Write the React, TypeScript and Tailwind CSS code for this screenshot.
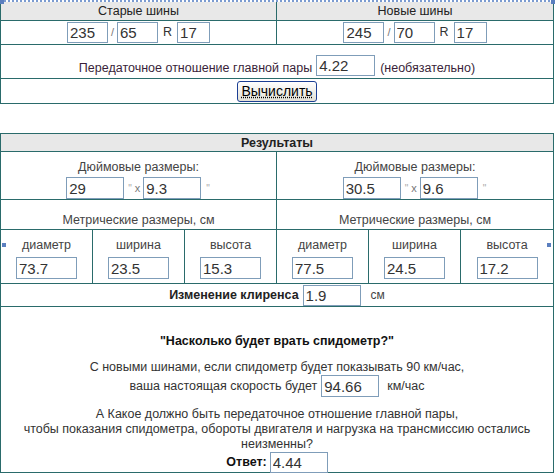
import React from "react";

const line = "border-[#2a6b6b]";

function Field({ value, className = "" }: { value: string; className?: string }) {
  return (
    <input
      readOnly
      value={value}
      className={`h-[21px] border border-[#7f9db9] bg-white px-[2px] text-[15px] leading-none text-[#333] outline-none font-['Liberation_Sans',Arial,sans-serif] ${className}`}
    />
  );
}

function TireInputs({ a, b, c }: { a: string; b: string; c: string }) {
  return (
    <div className="flex h-full items-center justify-center">
      <Field value={a} className="w-[41px]" />
      <span className="mx-[3px] text-[11px] text-[#777]">/</span>
      <Field value={b} className="w-[41px]" />
      <span className="mx-[5px] text-[#333]">R</span>
      <Field value={c} className="w-[33px]" />
    </div>
  );
}

function InchBlock({ d, w }: { d: string; w: string }) {
  return (
    <div className="flex flex-col items-center pt-[8px]">
      <span className="text-[#444]">Дюймовые размеры:</span>
      <div className="mt-[2px] flex items-center">
        <Field value={d} className="w-[58px] h-[22px]" />
        <span className="ml-[4px] text-[10px] text-[#aaa]">"</span>
        <span className="ml-[3px] mr-[3px] text-[11px] text-[#777]">x</span>
        <Field value={w} className="w-[58px] h-[22px]" />
        <span className="ml-[5px] mr-[1px] text-[10px] text-[#aaa]">"</span>
      </div>
    </div>
  );
}

function Handle({ className }: { className: string }) {
  return <span className={`absolute h-[4px] w-[4px] bg-[#5b7fbf] ${className}`} />;
}

export default function App() {
  const metric = [
    { label: "диаметр", value: "73.7" },
    { label: "ширина", value: "23.5" },
    { label: "высота", value: "15.3" },
    { label: "диаметр", value: "77.5" },
    { label: "ширина", value: "24.5" },
    { label: "высота", value: "17.2" },
  ];

  return (
    <div className="relative h-[474px] w-[556px] bg-white text-[12.5px] leading-[15px] text-[#2e1e2e] font-['Liberation_Sans',Arial,sans-serif]">
      {/* first form */}
      <div className="h-[2px] w-[554px] border-t-2 border-dotted border-[#7b9bd0]" />
      <div className={`w-[554px] border-x ${line}`}>
        <div className={`grid grid-cols-2 border-b ${line}`}>
          <div className={`h-[18px] border-r ${line} bg-[#e8e8e8] text-center leading-[18px] text-[#222]`}>
            Старые шины
          </div>
          <div className="h-[18px] bg-[#e8e8e8] text-center leading-[18px] text-[#222]">Новые шины</div>
        </div>
        <div className={`grid h-[24px] grid-cols-2 border-b ${line}`}>
          <div className={`border-r ${line}`}>
            <TireInputs a="235" b="65" c="17" />
          </div>
          <div>
            <TireInputs a="245" b="70" c="17" />
          </div>
        </div>
        <div className={`flex h-[34px] items-end justify-center pb-[2px] border-b ${line}`}>
          <span className="mr-[4px] text-[#3a1f3a]">Передаточное отношение главной пары</span>
          <Field value="4.22" className="w-[59px]" />
          <span className="ml-[5px] text-[#3a1f3a]">(необязательно)</span>
        </div>
        <div className={`flex h-[25px] items-center justify-center border-b ${line}`}>
          <button className="h-[21px] w-[80px] rounded-[3px] border border-[#1c3f94] bg-gradient-to-b from-white to-[#e3e1d6] text-[14px] leading-none text-black underline decoration-dotted">
            Вычислить
          </button>
        </div>
      </div>

      {/* results */}
      <div className={`mt-[29px] w-[554px] border-x border-t ${line}`}>
        <div className={`h-[18px] border-b ${line} bg-[#e8e8e8] text-center font-bold leading-[18px] text-[#222]`}>
          Результаты
        </div>
        <div className={`grid h-[48px] grid-cols-2 border-b ${line}`}>
          <div className={`border-r ${line}`}>
            <InchBlock d="29" w="9.3" />
          </div>
          <InchBlock d="30.5" w="9.6" />
        </div>
        <div className={`grid h-[30px] grid-cols-2 border-b ${line}`}>
          <div className={`flex items-end justify-center pb-[1px] border-r ${line} text-[#444]`}>
            Метрические размеры, см
          </div>
          <div className="flex items-end justify-center pb-[1px] text-[#444]">Метрические размеры, см</div>
        </div>
        <div className={`grid grid-cols-6 border-b ${line}`}>
          {metric.map((m, i) => (
            <div key={i} className={`flex flex-col items-center ${i < 5 ? `border-r ${line}` : ""}`}>
              <span className="flex h-[26px] items-center pt-[5px] text-[#444]">{m.label}</span>
              <Field value={m.value} className="mt-[1px] mb-[4px] w-[61px] h-[22px]" />
            </div>
          ))}
        </div>
        <div className={`flex h-[23px] items-center justify-center border-b ${line}`}>
          <span className="mr-[4px] font-bold text-[#222]">Изменение клиренса</span>
          <Field value="1.9" className="w-[58px]" />
          <span className="ml-[10px] text-[12px] text-[#444]">см</span>
        </div>
        <div className={`flex h-[166px] flex-col items-center border-b ${line} pt-[27px] text-center`}>
          <p className="font-bold text-[#111]">"Насколько будет врать спидометр?"</p>
          <p className="mt-[11px] text-[#333]">С новыми шинами, если спидометр будет показывать 90 км/час,</p>
          <div className="flex items-center text-[#333]">
            <span className="mr-[4px]">ваша настоящая скорость будет</span>
            <Field value="94.66" className="w-[58px] h-[22px]" />
            <span className="ml-[8px]">км/час</span>
          </div>
          <p className="mt-[10px] text-[#333]">А Какое должно быть передаточное отношение главной пары,</p>
          <p className="text-[#333]">чтобы показания спидометра, обороты двигателя и нагрузка на трансмиссию остались</p>
          <p className="text-[#333]">неизменны?</p>
          <div className="flex items-center">
            <span className="mr-[3px] font-bold text-[#111]">Ответ:</span>
            <Field value="4.44" className="w-[58px]" />
          </div>
        </div>
      </div>

      <Handle className="left-0 top-0" />
      <Handle className="left-[551px] top-0" />
      <Handle className="left-[2px] top-[243px]" />
      <Handle className="left-[547px] top-[243px]" />
    </div>
  );
}
